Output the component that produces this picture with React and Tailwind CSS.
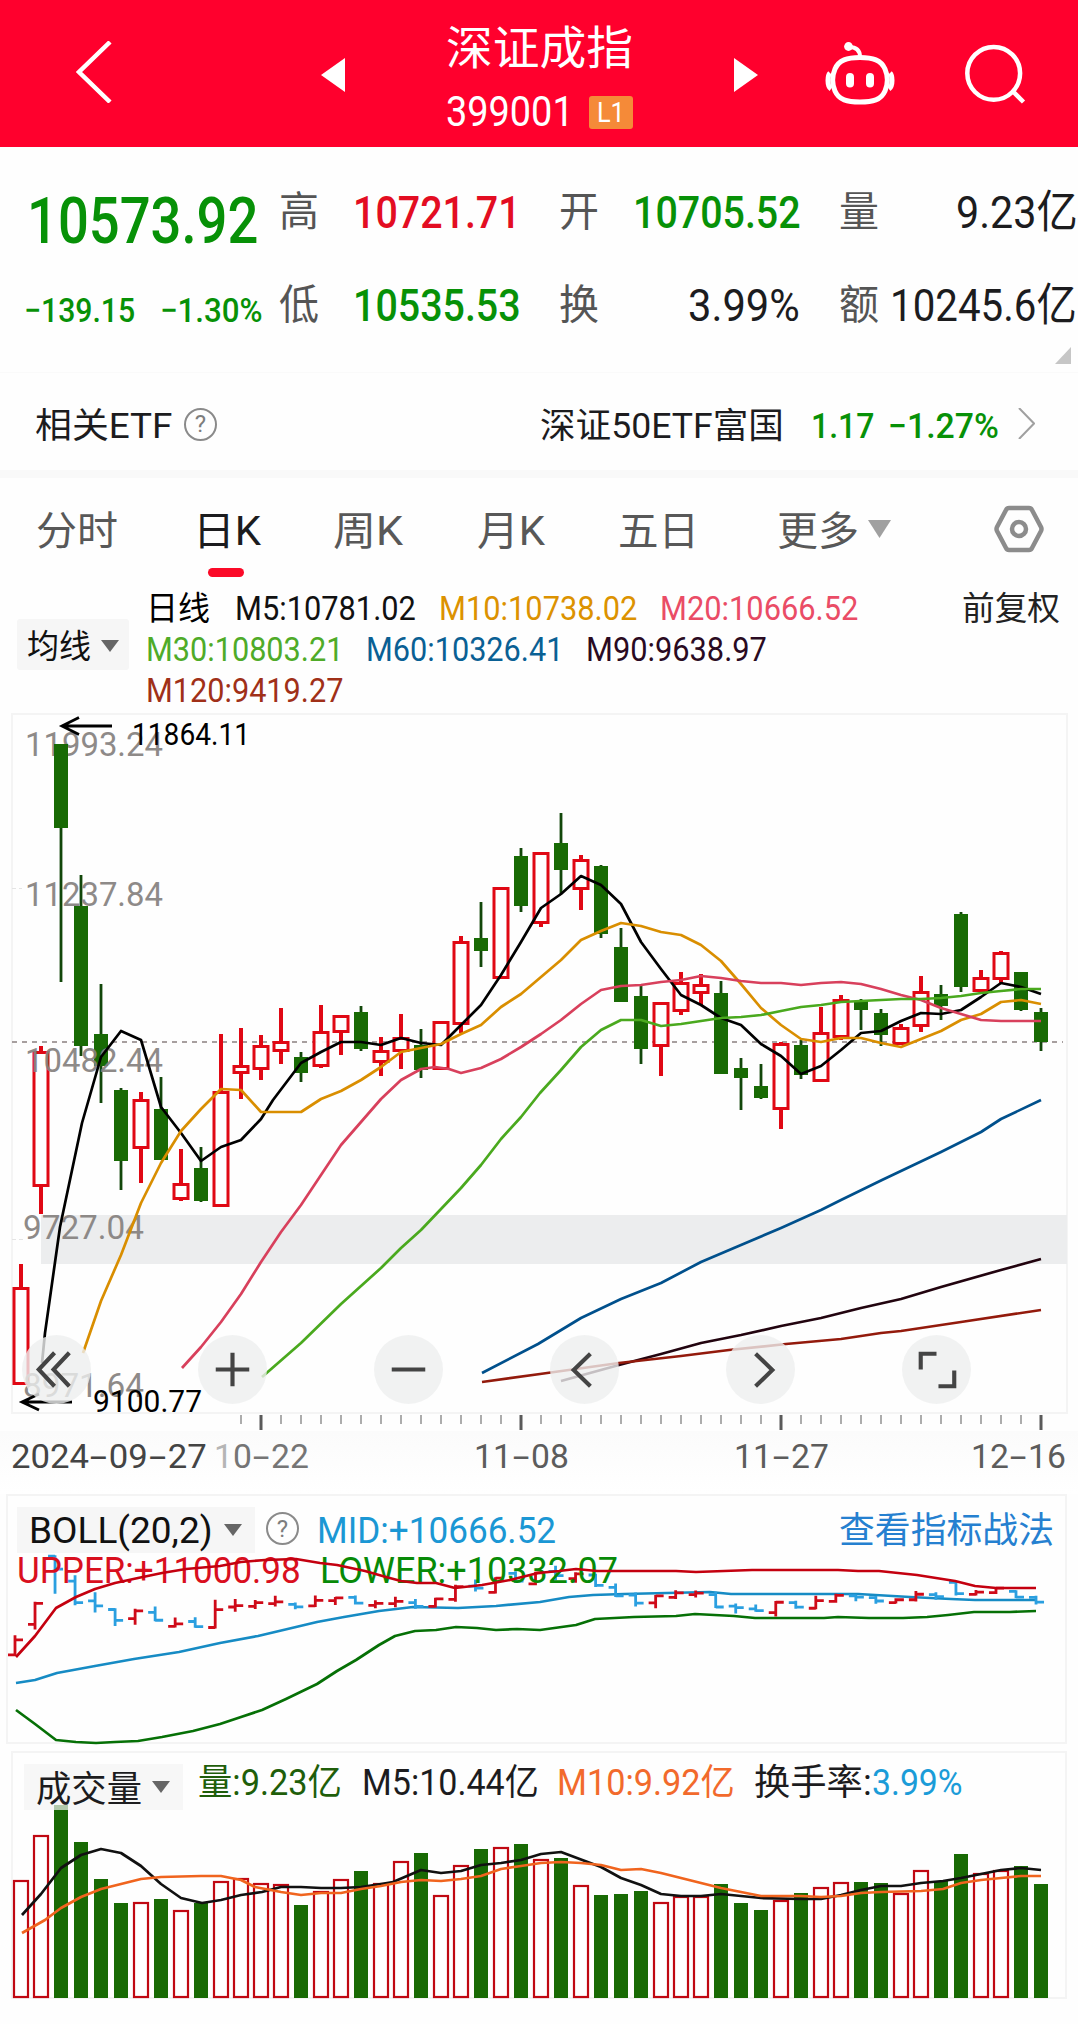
import React, { useLayoutEffect, useRef, useState } from 'react';

// Stretches a run of text horizontally so that it fills the width of its box.
function Fit({ className = '', children }) {
  const outer = useRef(null);
  const inner = useRef(null);
  const [k, setK] = useState(1);
  useLayoutEffect(() => {
    setK(outer.current.offsetWidth / inner.current.offsetWidth);
  }, []);
  return (
    <span ref={outer} className={'block shrink-0 whitespace-nowrap ' + className}>
      <span ref={inner} className="inline-block origin-left" style={{ transform: `scaleX(${k})` }}>
        {children}
      </span>
    </span>
  );
}

const Dash = () => <span className="mx-[5px] inline-block scale-x-[1.8]">-</span>;

const Caret = ({ className }) => (
  <svg viewBox="0 0 20 13" preserveAspectRatio="none" className={'shrink-0 ' + className}>
    <path d="M0 0H20L10 13Z" fill="currentColor" />
  </svg>
);

const Help = ({ className }) => (
  <span className={'flex size-[33px] shrink-0 items-center justify-center rounded-full border-2 border-[#8a8a8a] text-[24px] leading-none text-[#7d7d7d] ' + className}>
    ?
  </span>
);

// [rising, high, body top, body bottom, low]
const candles = [
  [1, 1264, 1287, 1385, 1385], [1, 1046, 1051, 1187, 1214], [0, 744, 744, 828, 982], [0, 875, 906, 1046, 1056],
  [0, 984, 1034, 1066, 1103], [0, 1088, 1090, 1161, 1190], [1, 1092, 1099, 1149, 1183], [0, 1077, 1109, 1160, 1160],
  [1, 1149, 1183, 1200, 1201], [0, 1147, 1168, 1201, 1202], [1, 1034, 1091, 1207, 1207], [1, 1028, 1065, 1074, 1099],
  [1, 1035, 1045, 1070, 1080], [1, 1008, 1041, 1052, 1064], [0, 1052, 1057, 1073, 1082], [1, 1005, 1031, 1067, 1068],
  [1, 1015, 1015, 1033, 1055], [0, 1006, 1012, 1049, 1051], [1, 1037, 1050, 1063, 1076], [1, 1014, 1037, 1052, 1069],
  [0, 1029, 1045, 1070, 1078], [1, 1021, 1021, 1070, 1070], [1, 936, 941, 1025, 1033], [0, 902, 938, 951, 967],
  [1, 887, 887, 979, 979], [0, 848, 856, 906, 912], [1, 852, 852, 924, 927], [0, 813, 843, 870, 894],
  [1, 855, 859, 890, 910], [0, 865, 866, 934, 938], [0, 928, 947, 1002, 1002], [0, 986, 996, 1049, 1064],
  [1, 1002, 1002, 1047, 1076], [1, 972, 982, 1012, 1015], [1, 974, 984, 994, 1005], [0, 981, 993, 1074, 1074],
  [0, 1058, 1068, 1078, 1110], [0, 1064, 1086, 1098, 1099], [1, 1042, 1043, 1110, 1129], [0, 1040, 1045, 1075, 1079],
  [1, 1007, 1032, 1082, 1082], [1, 995, 999, 1038, 1040], [0, 999, 1001, 1010, 1030], [0, 1009, 1013, 1035, 1046],
  [1, 1024, 1027, 1045, 1045], [1, 976, 991, 1027, 1032], [0, 985, 994, 1006, 1020], [0, 912, 914, 987, 992],
  [1, 970, 977, 992, 992], [1, 951, 952, 980, 983], [0, 972, 972, 1010, 1011], [0, 1008, 1012, 1042, 1051],
];

const volumeTops = [
  1880, 1835, 1805, 1842, 1879, 1903, 1902, 1899, 1910, 1903, 1881, 1878, 1883, 1884, 1905, 1891, 1879, 1871,
  1883, 1861, 1853, 1895, 1865, 1849, 1847, 1844, 1859, 1858, 1885, 1895, 1894, 1891, 1902, 1896, 1896, 1884,
  1903, 1910, 1900, 1893, 1887, 1882, 1882, 1883, 1893, 1870, 1881, 1854, 1873, 1870, 1866, 1884,
];

const averages = [
  ['#000', '42,1363 45,1333 60,1227 82,1123 101,1057 121,1031 141,1040 161,1107 181,1133 201,1161 221,1147 241,1140 261,1119 273,1100 301,1063 321,1052 341,1042 361,1042 381,1045 401,1038 421,1043 441,1045 461,1025 481,1005 501,975 521,942 541,908 561,894 581,876 601,885 621,904 641,942 661,969 681,995 701,1005 721,1018 741,1025 761,1044 781,1056 801,1074 821,1066 841,1050 861,1033 881,1031 901,1021 921,1013 941,1014 961,1010 981,997 1001,983 1021,987 1041,994'],
  ['#d98e00', '83,1353 101,1301 121,1255 141,1203 161,1163 181,1131 201,1109 221,1089 241,1090 261,1112 301,1112 321,1099 341,1091 361,1080 381,1067 401,1052 421,1048 441,1044 461,1034 481,1025 501,1007 521,994 541,977 561,960 581,940 601,931 621,923 641,926 661,932 681,935 701,945 721,961 741,984 761,1008 781,1025 801,1039 821,1042 841,1038 861,1038 881,1043 901,1047 921,1039 941,1031 961,1020 981,1014 1001,1002 1021,1000 1041,1004'],
  ['#d8405c', '182,1368 201,1347 221,1322 241,1294 261,1262 281,1232 301,1205 321,1175 341,1145 361,1122 381,1099 401,1080 421,1069 435,1067 449,1069 461,1073 481,1068 501,1059 521,1047 541,1034 561,1020 581,1004 601,990 621,986 641,985 661,982 681,980 701,976 721,978 741,981 761,983 781,983 801,985 821,983 841,982 861,984 881,989 901,995 921,1000 941,1008 961,1014 981,1020 1001,1021 1041,1021'],
  ['#4aa91e', '262,1377 301,1343 341,1304 381,1268 401,1248 421,1230 441,1209 461,1188 481,1165 501,1139 521,1117 540,1093 561,1070 581,1047 601,1030 621,1020 641,1020 661,1026 681,1024 701,1021 721,1018 741,1017 761,1015 781,1011 801,1007 821,1005 841,1002 861,1001 901,999 921,999 941,998 961,996 981,993 1001,991 1021,989 1041,989'],
  ['#00508c', '482,1373 538,1344 581,1318 621,1299 661,1283 701,1262 741,1245 781,1228 821,1210 841,1200 882,1180 941,1152 981,1132 1001,1119 1041,1100'],
  ['#22040f', '561,1381 619,1365 661,1354 701,1343 741,1335 781,1326 821,1318 861,1308 901,1299 941,1287 1001,1270 1041,1259'],
  ['#931a0c', '482,1382 540,1374 619,1363 681,1356 729,1350 786,1344 841,1339 881,1333 901,1331 961,1322 1041,1310'],
];

const bands = [
  ['#c4000f', '16,1657 35,1636 56,1608 76,1597 95,1589 115,1583 138,1578 162,1573 186,1569 220,1566 241,1562 265,1560 296,1559 320,1563 337,1565 365,1571 386,1577 401,1581 417,1583 436,1583 455,1588 482,1585 510,1580 538,1573 559,1571 576,1569 597,1571 676,1571 696,1572 752,1570 838,1570 858,1571 879,1571 917,1575 955,1581 975,1586 996,1588 1036,1588'],
  ['#168bc4', '16,1683 35,1680 57,1673 95,1666 134,1659 179,1652 220,1643 258,1636 296,1627 317,1622 344,1617 379,1611 413,1607 458,1608 496,1606 540,1602 569,1597 593,1595 624,1594 710,1592 731,1594 858,1594 910,1597 951,1599 975,1600 1036,1600'],
  ['#067006', '16,1710 35,1724 56,1740 76,1742 96,1743 115,1742 138,1741 162,1737 193,1731 220,1724 241,1717 262,1710 286,1699 317,1684 337,1671 356,1660 379,1645 395,1636 415,1631 436,1630 456,1627 477,1628 496,1630 517,1629 540,1630 576,1625 595,1619 634,1617 676,1616 695,1614 734,1616 755,1618 824,1618 838,1617 869,1618 903,1618 927,1617 948,1615 974,1612 1010,1612 1036,1611'],
];

const volumeAverages = [
  ['#111', '22,1915 41,1894 61,1868 81,1855 101,1849 121,1853 141,1866 161,1884 181,1898 202,1903 221,1900 241,1895 262,1892 281,1887 301,1887 321,1888 341,1888 361,1887 381,1884 393,1882 421,1870 441,1873 461,1871 481,1865 501,1863 521,1860 541,1854 561,1852 601,1867 621,1878 641,1885 661,1894 681,1896 701,1896 721,1894 741,1896 761,1898 801,1899 821,1899 841,1895 861,1890 881,1886 901,1886 921,1883 943,1881 961,1878 981,1874 1001,1870 1021,1868 1041,1870'],
  ['#f0641e', '22,1933 45,1920 61,1908 81,1897 101,1889 121,1884 141,1879 161,1877 201,1876 221,1876 241,1880 255,1887 281,1892 301,1895 321,1893 341,1893 361,1889 381,1886 401,1882 421,1880 441,1881 461,1879 481,1876 501,1869 521,1866 541,1863 561,1862 581,1863 601,1865 621,1870 641,1869 661,1873 681,1878 701,1883 721,1888 741,1892 761,1896 801,1896 821,1897 841,1896 861,1893 881,1892 921,1891 943,1889 961,1883 981,1880 1001,1878 1021,1876 1041,1876'],
];

const Lines = ({ data }) =>
  data.map(([color, points]) => (
    <polyline key={color} points={points} fill="none" stroke={color} strokeWidth="2.7" strokeLinejoin="round" />
  ));

const PriceLabel = ({ x, y, w, children }) => (
  <text x={x} y={y} textLength={w} lengthAdjust="spacingAndGlyphs" fontSize="34" fill="#85817f" opacity="0.92">
    {children}
  </text>
);

function Header() {
  return (
    <header className="flex h-[147px] bg-[#ff002d] text-white">
      <svg viewBox="0 0 36 62" className="mt-[41px] ml-[76px] h-[62px] w-[36px]" fill="none" stroke="currentColor" strokeWidth="4.5">
        <path d="M34 1L3 31L34 61" />
      </svg>
      <svg viewBox="0 0 24 34" className="mt-[58px] ml-[209px] h-[34px] w-[24px]">
        <path d="M24 0V34L0 17Z" fill="currentColor" />
      </svg>
      <div className="ml-[101px] flex w-[187px] flex-col">
        <Fit className="mt-[18px] h-[60px] w-[187px] text-[46px] leading-[60px]">深证成指</Fit>
        <div className="mt-[14px] flex h-[40px] items-center">
          <Fit className="w-[128px] text-[42px] leading-[40px]">399001</Fit>
          <span className="ml-[15px] flex h-[33px] w-[44px] items-center justify-center rounded-[3px] bg-[#f58a38]">
            <Fit className="w-[28px] text-[28px] leading-[33px]">L1</Fit>
          </span>
        </div>
      </div>
      <svg viewBox="0 0 24 34" className="mt-[58px] ml-[101px] h-[34px] w-[24px]">
        <path d="M0 0V34L24 17Z" fill="currentColor" />
      </svg>
      <svg viewBox="0 0 70 66" className="mt-[41px] ml-[67px] h-[66px] w-[70px]" fill="none" stroke="currentColor" strokeWidth="5">
        <path d="M24 6C31 6 35 9 35 16" strokeWidth="4" />
        <circle cx="23.5" cy="5.500" r="4.400" fill="currentColor" stroke="none" />
        <path d="M35 16.500C48 16.500 56 19 60 28C63 35 63 43 60 50C56 59 48 61 35 61C22 61 14 59 10 50C7 43 7 35 10 28C14 19 22 16.500 35 16.500Z" />
        <path d="M5 32Q3 34 3 39.500Q3 46 6 48M65 32Q67 34 67 39.500Q67 46 64 48" />
        <path d="M25 36V42.500M45 36V42.500" strokeWidth="8" strokeLinecap="round" />
      </svg>
      <svg viewBox="0 0 62 62" className="mt-[44px] ml-[69px] h-[62px] w-[62px]" fill="none" stroke="currentColor" strokeWidth="4.500">
        <circle cx="29.7" cy="29.300" r="26.400" />
        <path d="M48.500 47L59.500 58" />
      </svg>
    </header>
  );
}

const cellLabel = 'w-[40px] text-[41px] text-[#555]';

function Stats() {
  return (
    <section className="h-[225px] text-[#1c1c1e]">
      <div className="flex h-[200px]">
        <div className="w-[279px] shrink-0 pt-[43px] text-[#079107]">
          <Fit className="ml-[27px] h-[64px] w-[231px] text-[64px] leading-[64px] font-medium">10573.92</Fit>
          <div className="mt-[36px] flex text-[34px] leading-[40px] font-medium">
            <Fit className="ml-[24px] w-[111px]">−139.15</Fit>
            <Fit className="ml-[25px] w-[103px]">−1.30%</Fit>
          </div>
        </div>
        <div className="flex-1 pt-[19px] text-[45px] leading-[93px]">
          <div className="flex h-[93px]">
            <Fit className={cellLabel}>高</Fit>
            <Fit className="ml-[34px] w-[168px] font-medium text-[#e30d22]">10721.71</Fit>
            <Fit className={'ml-[38px] ' + cellLabel}>开</Fit>
            <Fit className="ml-[34px] w-[168px] font-medium text-[#079107]">10705.52</Fit>
            <Fit className={'ml-[38px] ' + cellLabel}>量</Fit>
            <Fit className="ml-[77px] w-[122px]">9.23亿</Fit>
          </div>
          <div className="flex h-[93px]">
            <Fit className={cellLabel}>低</Fit>
            <Fit className="ml-[34px] w-[168px] font-medium text-[#079107]">10535.53</Fit>
            <Fit className={'ml-[38px] ' + cellLabel}>换</Fit>
            <Fit className="ml-[89px] w-[112px]">3.99%</Fit>
            <Fit className={'ml-[39px] ' + cellLabel}>额</Fit>
            <Fit className="ml-[11px] w-[187px]">10245.6亿</Fit>
          </div>
        </div>
      </div>
      <svg viewBox="0 0 16 17" className="ml-[1055px] h-[17px] w-[16px]">
        <path d="M16 0V17H0Z" fill="#c6c6c6" />
      </svg>
    </section>
  );
}

function EtfRow() {
  return (
    <section className="flex h-[98px] items-center border-t border-[#fafafa] pb-[1px] text-[35px] leading-[50px] text-[#1c1c1e]">
      <Fit className="mt-[11px] ml-[35px] w-[137px]">相关ETF</Fit>
      <Help className="mt-[6px] ml-[12px]" />
      <Fit className="mt-[11px] ml-[323px] w-[244px]">深证50ETF富国</Fit>
      <Fit className="mt-[11px] ml-[27px] w-[63px] font-medium text-[#079107]">1.17</Fit>
      <Fit className="mt-[11px] ml-[14px] w-[111px] font-medium text-[#079107]">−1.27%</Fit>
      <svg viewBox="0 0 17 31" className="mt-[4px] ml-[19px] h-[31px] w-[17px]" fill="none" stroke="#a0a0a0" strokeWidth="2">
        <path d="M1 0L16 15.500L1 31" />
      </svg>
    </section>
  );
}

function Tabs() {
  return (
    <nav className="flex h-[107px] text-[40px] leading-[108px] text-[#585858]">
      <Fit className="ml-[36px] w-[82px]">分时</Fit>
      <div className="ml-[75px] w-[68px]">
        <Fit className="h-[90px] w-[68px] text-[#1c1c1e]">日K</Fit>
        <div className="ml-[15px] h-[9px] w-[36px] rounded-full bg-[#fb0a28]" />
      </div>
      <Fit className="ml-[72px] w-[70px]">周K</Fit>
      <Fit className="ml-[74px] w-[68px]">月K</Fit>
      <Fit className="ml-[73px] w-[81px]">五日</Fit>
      <Fit className="ml-[78px] w-[82px]">更多</Fit>
      <Caret className="mt-[42px] ml-[9px] h-[18px] w-[23px] text-[#a0a0a0]" />
      <svg viewBox="0 0 50 48" className="mt-[27px] ml-[103px] h-[48px] w-[50px]" fill="none" stroke="#8c8c8c" strokeWidth="4.5">
        <path d="M15 3H35Q37 3 38 5L47 22Q48 24 47 26L38 43Q37 45 35 45H15Q13 45 12 43L3 26Q2 24 3 22L12 5Q13 3 15 3Z" />
        <circle cx="25" cy="24" r="7" />
      </svg>
    </nav>
  );
}

function Legend() {
  return (
    <section className="flex h-[121px] text-[33px] leading-[41px] text-[#111]">
      <div className="mt-[34px] ml-[17px] flex h-[51px] w-[112px] items-center rounded-[3px] bg-[#f6f6f6] pl-[10px]">
        <Fit className="mt-[4px] w-[64px]">均线</Fit>
        <Caret className="mt-[2px] ml-[10px] h-[12px] w-[18px] text-[#666]" />
      </div>
      <div className="mt-[3px] ml-[17px]">
        <div className="flex">
          <Fit className="w-[64px] text-black">日线</Fit>
          <Fit className="ml-[25px] w-[181px]">M5:10781.02</Fit>
          <Fit className="ml-[23px] w-[198px] text-[#dc9200]">M10:10738.02</Fit>
          <Fit className="ml-[23px] w-[198px] text-[#ea4c66]">M20:10666.52</Fit>
          <Fit className="ml-[104px] w-[98px] text-[#222]">前复权</Fit>
        </div>
        <div className="flex">
          <Fit className="w-[197px] text-[#4fab28]">M30:10803.21</Fit>
          <Fit className="ml-[23px] w-[197px] text-[#0a6094]">M60:10326.41</Fit>
          <Fit className="ml-[23px] w-[181px] text-[#2a0a22]">M90:9638.97</Fit>
        </div>
        <Fit className="w-[197px] text-[#a03018]">M120:9419.27</Fit>
      </div>
    </section>
  );
}

const toolIcons = [
  'M33 18L17 35L33 52M48 18L32 35L48 52',
  'M35 18V52M18 35H52',
  'M18 35H52',
  'M41 19L24 35.5L41 52',
  'M30 19L47 35.5L30 52',
  'M35 19H19V35M53 36V52H37',
];

function PriceChart() {
  return (
    <section className="relative h-[725px]">
      <svg viewBox="0 706 1078 725" className="h-[725px] w-[1078px]">
        <rect x="12" y="714" width="1055" height="699" fill="none" stroke="#f4f4f4" strokeWidth="2" />
        <rect x="41" y="1215" width="1026" height="49" fill="#ecedee" />
        <path d="M12 888.500H22M12 1239.500H25" stroke="#e4e4e4" strokeDasharray="4 3" />
        <path d="M12 1042H1063" stroke="#8b8080" strokeWidth="1.600" strokeDasharray="5 5" />
        <PriceLabel x={25} y={755.5} w={138}>11993.24</PriceLabel>
        {candles.map(([up, high, top, bottom, low], i) => {
          const x = 21 + i * 20;
          return up ? (
            <g key={i} stroke="#e00814" strokeWidth="3" fill="none">
              <path d={`M${x} ${high}V${top}M${x} ${bottom}V${low}`} strokeWidth="4" />
              <rect x={x - 7} y={top + 1.500} width="14" height={Math.max(bottom - top - 3, 2)} fill="#fff" fillOpacity="0.9" />
            </g>
          ) : (
            <g key={i}>
              <path d={`M${x} ${high}V${low}`} stroke="#12470a" strokeWidth="2.800" />
              <rect x={x - 7} y={top} width="14" height={bottom - top} fill="#186a04" />
            </g>
          );
        })}
        <PriceLabel x={25} y={906} w={138}>11237.84</PriceLabel>
        <PriceLabel x={25} y={1071.5} w={138}>10482.44</PriceLabel>
        <PriceLabel x={23} y={1239} w={121}>9727.04</PriceLabel>
        <PriceLabel x={23} y={1397} w={121}>8971.64</PriceLabel>
        <Lines data={averages} />
        <g fill="none" stroke="#000" strokeWidth="2.800">
          <path d="M112 726H62M79 717.500L62 726L79 734.500" />
          <path d="M72 1402H22M39 1394L22 1402L39 1410" />
        </g>
        <g fontSize="30.5" fill="#000">
          <text x="132" y="745" textLength="118" lengthAdjust="spacingAndGlyphs">11864.11</text>
          <text x="93" y="1412" textLength="109" lengthAdjust="spacingAndGlyphs">9100.77</text>
        </g>
        <g stroke="#5a5a5a">
          {Array.from({ length: 41 }, (_, n) => {
            const major = n % 13 === 1;
            return (
              <path key={n} d={`M${241 + n * 20} 1415V${major ? 1430 : 1424}`} strokeWidth={major ? 3 : 1} />
            );
          })}
        </g>
      </svg>
      <div className="absolute top-[629px] left-[22px] flex gap-[107px]">
        {toolIcons.map((d) => (
          <svg key={d} viewBox="0 0 70 70" className="size-[69px] rounded-full bg-[#eeefef]/80" fill="none" stroke="#444" strokeWidth="4.200">
            <path d={d} />
          </svg>
        ))}
      </div>
    </section>
  );
}

function DateAxis() {
  return (
    <div className="flex h-[63px] bg-gradient-to-b from-[#fbfbfb] to-white text-[34px] leading-[51px] text-[#5c5c5c]">
      <Fit className="ml-[11px] w-[196px] text-[#444]">2024<Dash />09<Dash />27</Fit>
      <Fit className="ml-[7px] w-[95px] text-[#757575]"><span className="text-[#b5b5b5]">1</span>0<Dash />22</Fit>
      <Fit className="ml-[165px] w-[95px]">11<Dash />08</Fit>
      <Fit className="ml-[165px] w-[95px]">11<Dash />27</Fit>
      <Fit className="ml-[142px] w-[95px]">12<Dash />16</Fit>
    </div>
  );
}

function BollPanel() {
  const mapY = (y) => 1602.7 + 0.154 * (y - 1046);
  return (
    <section className="relative ml-[6px] h-[250px] w-[1061px] border-2 border-[#f4f4f4]">
      <svg viewBox="8 1496 1057 246" className="absolute inset-0 h-[246px] w-[1057px] overflow-visible">
        <Lines data={bands.slice(1)} />
        {candles.map(([up, high, top, bottom, low], i) => {
          const x = 15 + i * 20.02;
          const open = mapY(up ? bottom : top);
          const close = mapY(up ? top : bottom);
          return (
            <path
              key={i}
              d={`M${x - 7} ${open}H${x}M${x} ${mapY(high) - 1}V${mapY(low) + 1}M${x} ${close}H${x + 8}`}
              stroke={up ? '#cf0a18' : '#2a9fe0'}
              strokeWidth="2.800"
              fill="none"
            />
          );
        })}
      </svg>
      <div className="relative flex pt-[11px] text-[36px] leading-[46px]">
        <div className="ml-[9px] flex h-[46px] w-[238px] items-center bg-[#f6f6f6] pl-[12px] text-[#111]">
          <Fit className="mt-[2px] w-[184px] text-[37px]">BOLL(20,2)</Fit>
          <Caret className="ml-[11px] h-[12px] w-[18px] text-[#666]" />
        </div>
        <Help className="mt-[5px] ml-[11px]" />
        <Fit className="mt-[1px] ml-[18px] w-[239px] text-[#1b97d4]">MID:+10666.52</Fit>
        <Fit className="mt-[1px] ml-[283px] w-[215px] text-[#2580d0]">查看指标战法</Fit>
      </div>
      <div className="relative mt-[-6px] flex text-[36px] leading-[46px]">
        <Fit className="ml-[9px] w-[284px] text-[#d90f1e]">UPPER:+11000.98</Fit>
        <Fit className="ml-[19px] w-[298px] text-[#078a07]">LOWER:+10332.07</Fit>
      </div>
      <svg viewBox="8 1496 1057 246" className="absolute inset-0 h-[246px] w-[1057px] overflow-visible">
        <Lines data={bands.slice(0, 1)} />
      </svg>
    </section>
  );
}

function VolumePanel() {
  return (
    <section className="relative mt-[7px] ml-[11px] h-[248px] w-[1056px] border-2 border-[#f4f4f4]">
      <svg viewBox="13 1753 1052 244" className="absolute inset-0 h-[244px] w-[1052px] overflow-visible">
        {volumeTops.map((top, i) => {
          const x = 21 + i * 20;
          return candles[i][0] ? (
            <rect key={i} x={x - 7} y={top + 1} width="14" height={1996 - top} fill="#fff" stroke="#c00812" strokeWidth="2.2" />
          ) : (
            <rect key={i} x={x - 7} y={top} width="14" height={1998 - top} fill="#186a04" />
          );
        })}
        <Lines data={volumeAverages} />
      </svg>
      <div className="relative flex pt-[7px] text-[36px] leading-[46px] text-[#1c1c1e]">
        <div className="mt-[4px] ml-[11px] flex h-[46px] w-[159px] items-center bg-[#f3f3f3]/70 pl-[12px]">
          <Fit className="mt-[5px] w-[106px]">成交量</Fit>
          <Caret className="ml-[10px] h-[12px] w-[18px] text-[#666]" />
        </div>
        <Fit className="ml-[15px] w-[144px] text-[#1f5e0a]">量:9.23亿</Fit>
        <Fit className="ml-[20px] w-[177px]">M5:10.44亿</Fit>
        <Fit className="ml-[18px] w-[178px] text-[#f26a2c]">M10:9.92亿</Fit>
        <Fit className="ml-[19px] w-[118px]">换手率:</Fit>
        <Fit className="w-[91px] text-[#1b9cd8]">3.99%</Fit>
      </div>
    </section>
  );
}

export default function App() {
  return (
    <main className="h-[2024px] w-[1078px] overflow-hidden bg-[#fefefe] font-['Roboto','Noto_Sans_CJK_SC',sans-serif]">
      <Header />
      <Stats />
      <EtfRow />
      <div className="h-[8px] bg-[#f9f9f9]" />
      <Tabs />
      <Legend />
      <PriceChart />
      <DateAxis />
      <BollPanel />
      <VolumePanel />
    </main>
  );
}
